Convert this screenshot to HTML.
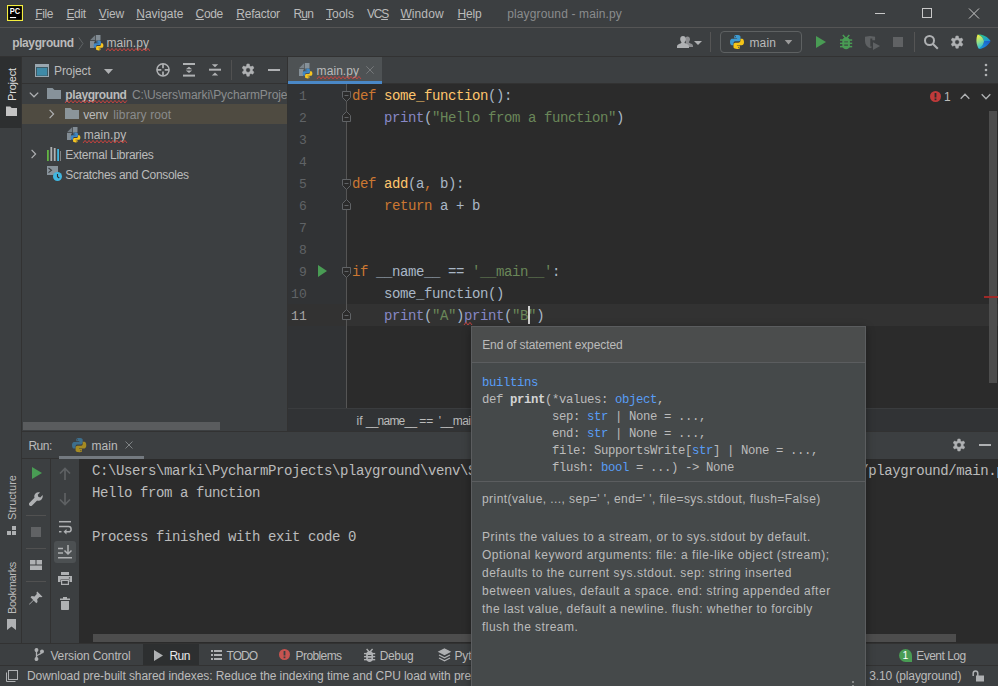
<!DOCTYPE html>
<html>
<head>
<meta charset="utf-8">
<title>playground - main.py</title>
<style>
*{box-sizing:border-box;margin:0;padding:0}
html,body{width:998px;height:686px;overflow:hidden;background:#3c3f41}
body{position:relative;font-family:"Liberation Sans",sans-serif;font-size:12px;color:#bbbbbb}
.a{position:absolute}
.t{position:absolute;white-space:pre;line-height:16px;height:16px}
.m{position:absolute;white-space:pre;font-family:"Liberation Mono",monospace}
.v{position:absolute;white-space:pre;line-height:16px;height:16px;transform-origin:0 0;transform:rotate(-90deg)}
u{text-decoration:underline;text-underline-offset:1px;text-decoration-thickness:1px}
svg{position:absolute;overflow:visible}
.wave{text-decoration:underline wavy #bc3f3c;text-decoration-thickness:1px;text-underline-offset:2px}
.k{color:#cc7832}.f{color:#ffc66d}.s{color:#6a8759}.b{color:#8888c6}.l{color:#589df6}
.ln{position:absolute;width:30px;text-align:right;font-family:"Liberation Mono",monospace;font-size:13px;letter-spacing:.2px;line-height:22px;height:22px;color:#606366;padding-top:2px}
.cl{position:absolute;font-family:"Liberation Mono",monospace;font-size:14px;letter-spacing:-.4px;line-height:22px;height:22px;white-space:pre;color:#a9b7c6;padding-top:1px}
.con{position:absolute;font-family:"Liberation Mono",monospace;font-size:14px;letter-spacing:-.4px;line-height:22px;height:22px;white-space:pre;color:#bbbbbb;padding-top:1px}
.pc{position:absolute;font-family:"Liberation Mono",monospace;font-size:12.300px;letter-spacing:-.38px;line-height:17px;height:17px;white-space:pre;color:#bbbbbb}
</style>
</head>
<body>

<div class="a" style="left:0;top:0;width:998px;height:28px;background:#3c3f41;border-bottom:1px solid #555555"></div>
<svg style="left:7px;top:5px" width="16" height="16" viewBox="0 0 16 16"><rect width="16" height="16" fill="#f5ee3f"/><rect x="1.100" y="1.100" width="13.800" height="13.800" fill="#000"/><text x="2.800" y="9.400" font-family="Liberation Sans,sans-serif" font-weight="bold" font-size="8.800" fill="#fff" textLength="10.400" lengthAdjust="spacingAndGlyphs">PC</text><rect x="2.900" y="12" width="6.200" height="1.100" fill="#fff"/></svg>
<div class="t" id="t1" style="left:35.3px;top:5.5px;letter-spacing:-0.440px;"><u>F</u>ile</div>
<div class="t" id="t2" style="left:66.4px;top:5.5px;letter-spacing:-0.301px;"><u>E</u>dit</div>
<div class="t" id="t3" style="left:98.8px;top:5.5px;letter-spacing:-0.128px;"><u>V</u>iew</div>
<div class="t" id="t4" style="left:136.3px;top:5.5px;letter-spacing:-0.034px;"><u>N</u>avigate</div>
<div class="t" id="t5" style="left:195.6px;top:5.5px;letter-spacing:-0.376px;"><u>C</u>ode</div>
<div class="t" id="t6" style="left:236.3px;top:5.5px;letter-spacing:-0.220px;"><u>R</u>efactor</div>
<div class="t" id="t7" style="left:293.4px;top:5.5px;letter-spacing:-0.749px;">R<u>u</u>n</div>
<div class="t" id="t8" style="left:326px;top:5.5px;letter-spacing:-0.023px;"><u>T</u>ools</div>
<div class="t" id="t9" style="left:367px;top:5.5px;letter-spacing:-1.263px;">VC<u>S</u></div>
<div class="t" id="t10" style="left:400.4px;top:5.5px;letter-spacing:0.102px;"><u>W</u>indow</div>
<div class="t" id="t11" style="left:457.5px;top:5.5px;letter-spacing:-0.172px;"><u>H</u>elp</div>
<div class="t" id="t12" style="left:507.2px;top:5.5px;color:#8a8c8d;letter-spacing:0.137px;">playground - main.py</div>
<svg style="left:875px;top:8px" width="110" height="11" viewBox="0 0 110 11" fill="none" stroke="#c8c8c8" stroke-width="1"><path d="M0 5.500h10"/><rect x="47.500" y=".5" width="9" height="9"/><path d="M94 .5l10 10M104 .5l-10 10"/></svg>
<div class="a" style="left:0;top:28px;width:998px;height:29px;background:#3c3f41;border-bottom:1px solid #323232"></div>
<div class="t" id="t13" style="left:12.2px;top:35px;font-weight:bold;letter-spacing:-0.384px;">playground</div>
<svg style="left:78px;top:36.500px" width="6" height="13" viewBox="0 0 6 13" fill="none" stroke="#5f6365" stroke-width="1"><path d="M.8.5L5 6.500.8 12.500"/></svg>
<svg style="left:89px;top:34px" width="16" height="17" viewBox="0 0 16 17"><path fill="#9aa7b0" fill-opacity=".6" d="M6.300 1L1 6.300h5.300z"/><path fill="#9aa7b0" fill-opacity=".75" d="M7 1h4.500v5.500H8C6.300 6.500 5 7.800 5 9.500V14H1V7h6z"/><g transform="translate(3.900 5.900) scale(.7)"><path fill="#3f87c4" fill-rule="evenodd" d="M7.9 1C5 1 5.2 2.3 5.2 2.3v1.9h2.9v.6H3.4S1 4.5 1 8c0 3.4 2.1 3.3 2.1 3.3h1.4V9.4s-.1-2.1 2-2.1h3s2 0 2-1.900V2.900S11.800 1 7.900 1zM6.300 2.100a.55.55 0 1 1 0 1.100.55.55 0 0 1 0-1.100z"/><path fill="#f7c520" fill-rule="evenodd" d="M8.1 15c2.900 0 2.700-1.300 2.700-1.300v-1.900H7.900v-.6h4.700S15 11.500 15 8c0-3.400-2.100-3.300-2.100-3.300h-1.400v1.900s.1 2.100-2 2.100h-3s-2 0-2 1.900v2.500S4.200 15 8.100 15zM9.700 13.900a.55.55 0 1 1 0-1.100.55.55 0 0 1 0 1.100z"/></g></svg>
<div class="t" id="t14" style="left:106.4px;top:35px;letter-spacing:0.081px;">main.py</div>
<svg style="left:106px;top:48px" width="44" height="3.400" viewBox="0 0 44 3.400" fill="none" stroke="#c4433f" stroke-width="1"><polyline points="0,3 2,0.4 4,3 6,0.4 8,3 10,0.4 12,3 14,0.4 16,3 18,0.4 20,3 22,0.4 24,3 26,0.4 28,3 30,0.4 32,3 34,0.4 36,3 38,0.4 40,3 42,0.4 44,3"/></svg>
<svg style="left:677px;top:34px" width="30" height="16" viewBox="0 0 30 16"><path fill="#afb1b3" d="M10.500 2.500c1.500 0 2.500 1.200 2.500 2.800 0 1.100-.5 2.200-1.200 2.800.1.700.6 1 1.700 1.400 1.200.4 2.500 1 2.500 2.500v1H9.500v-1.500c0-1-.6-1.800-1.500-2.300.6-.3 1-.5 1.100-1.100C8.500 7.500 8 6.500 8 5.300c0-1.600 1-2.800 2.500-2.800z" fill-opacity=".7"/><path fill="#afb1b3" d="M6 2c1.700 0 2.800 1.300 2.800 3.100 0 1.200-.5 2.400-1.300 3.100.1.800.7 1.100 1.900 1.500 1.300.5 2.600 1.100 2.600 2.800V14H0v-1.500c0-1.700 1.300-2.300 2.600-2.800 1.200-.4 1.800-.7 1.900-1.500-.8-.7-1.300-1.900-1.300-3.100C3.200 3.300 4.300 2 6 2z"/><path fill="#afb1b3" d="M17 7h8l-4 4z"/></svg>
<div class="a" style="left:710px;top:32px;width:1px;height:20px;background:#555555"></div>
<div class="a" style="left:720px;top:31px;width:82px;height:22px;border:1px solid #5e6162;border-radius:4px"></div>
<svg style="left:729px;top:34px" width="16" height="16" viewBox="0 0 16 16"><path fill="#3d9ad1" fill-rule="evenodd" d="M7.9 1C5 1 5.2 2.3 5.2 2.3v1.9h2.9v.6H3.4S1 4.5 1 8c0 3.4 2.1 3.3 2.1 3.3h1.4V9.4s-.1-2.1 2-2.1h3s2 0 2-1.900V2.900S11.800 1 7.900 1zM6.300 2.100a.55.55 0 1 1 0 1.100.55.55 0 0 1 0-1.100z"/><path fill="#f5c518" fill-rule="evenodd" d="M8.1 15c2.900 0 2.700-1.300 2.700-1.300v-1.900H7.900v-.6h4.700S15 11.500 15 8c0-3.400-2.100-3.300-2.100-3.300h-1.400v1.900s.1 2.100-2 2.100h-3s-2 0-2 1.900v2.500S4.200 15 8.100 15zM9.700 13.900a.55.55 0 1 1 0-1.100.55.55 0 0 1 0 1.100z"/></svg>
<div class="t" id="t15" style="left:749.5px;top:35px;letter-spacing:0.121px;">main</div>
<svg style="left:784px;top:40px" width="9" height="5" viewBox="0 0 9 6"><path fill="#9b9b9b" d="M0 0h9L4.500 5.500z"/></svg>
<svg style="left:816px;top:36px" width="10" height="12" viewBox="0 0 10 12"><path fill="#499c54" d="M0 0l10 6-10 6z"/></svg>
<svg style="left:839.900px;top:34.800px" width="12.200" height="14.200" viewBox="0 0 12.200 14.200"><g fill="#499c54"><path fill-rule="evenodd" d="M2.300 6C2.300 3.500 4 2.200 6.100 2.200S9.900 3.500 9.900 6v4.500c0 2.500-1.900 3.700-3.800 3.700s-3.800-1.200-3.800-3.700zM4.200 6.500v1.100H8V6.500zM4.200 9.600v1.100H8V9.600z"/><rect x="0" y="4.300" width="12.200" height="1.500"/><rect x="0" y="7.600" width="12.200" height="1.500"/><rect x="0" y="10.900" width="12.200" height="1.500"/><path d="M2.300.5l1.100-1 2.700 3-1.100 1zM9.900.5l-1.100-1-2.700 3 1.100 1z"/></g></svg>
<svg style="left:865px;top:35.800px" width="16" height="14" viewBox="0 0 16 14"><path fill="#5e6163" d="M0 .8L5 0l5.100.8v3.400H7.300V2.400h-2v8.200h1.400v1L5 12.200C2 11 0 8.500 0 5z"/><path fill="#5e6163" d="M8 6.200l7.100 3.900L8 14z"/></svg>
<div class="a" style="left:893px;top:37px;width:10px;height:10px;background:#606264"></div>
<div class="a" style="left:914px;top:32px;width:1px;height:20px;background:#555555"></div>
<svg style="left:923px;top:34px" width="16" height="16" viewBox="0 0 16 16" fill="none" stroke="#afb1b3" stroke-width="2"><circle cx="6.500" cy="6.500" r="4.500"/><path d="M10 10l4.800 4.800"/></svg>
<svg style="left:950px;top:35px" width="14.2" height="14.2" viewBox="0 0 16 16"><path fill="#afb1b3" stroke="#afb1b3" stroke-width=".6" stroke-linejoin="round" fill-rule="evenodd" d="M9.73 3.41L9.32 1.13L6.68 1.13L6.27 3.41L4.89 4.21L2.71 3.42L1.39 5.71L3.17 7.20L3.17 8.80L1.39 10.29L2.71 12.58L4.89 11.79L6.27 12.59L6.68 14.87L9.32 14.87L9.73 12.59L11.11 11.79L13.29 12.58L14.61 10.29L12.83 8.80L12.83 7.20L14.61 5.71L13.29 3.42L11.11 4.21zM5.40 8.00a2.60 2.60 0 1 0 5.20 0a2.60 2.60 0 1 0 -5.20 0z"/></svg>
<svg style="left:975.500px;top:34px" width="15" height="15.500" viewBox="0 0 15 15.500"><defs><linearGradient id="cw1" x1=".2" y1="0" x2=".5" y2="1"><stop offset="0" stop-color="#fbf23f"/><stop offset=".5" stop-color="#8fe08a"/><stop offset="1" stop-color="#18b6ee"/></linearGradient><linearGradient id="cw2" x1="0" y1="0" x2="1" y2="1"><stop offset="0" stop-color="#2fd07a"/><stop offset="1" stop-color="#168fe6"/></linearGradient><linearGradient id="cw3" x1="1" y1="0" x2="0" y2="1"><stop offset="0" stop-color="#1f57c4"/><stop offset="1" stop-color="#159fe8"/></linearGradient></defs><path fill="url(#cw2)" d="M1.600.6C6.500.2 11.500 2.500 14.600 7H8C7.500 4.500 5 1.500 1.600.6z"/><path fill="url(#cw3)" d="M14.600 7C12.800 11 8.500 14.300 3 15.100 6 13 7.800 10 8 7z"/><path fill="url(#cw1)" d="M1.600.6C5 1.500 7.500 4.500 8 7 7.800 10 6 13 3 15.100 0 11-.3 5 1.600.6z"/></svg>
<div class="a" style="left:0;top:57px;width:22px;height:586px;background:#3c3f41;border-right:1px solid #323232"></div>
<div class="a" style="left:0;top:57px;width:21px;height:71px;background:#2d2f30"></div>
<div class="v" id="t16" style="left:4px;top:100.5px;font-size:11px;color:#dfdfdf;letter-spacing:-0.179px;">Project</div>
<svg style="left:5px;top:105px" width="13" height="12" viewBox="0 0 13 12"><path fill="#c4c4c4" d="M1 1.500h4.200L6.700 3H12v8H1z"/></svg>
<div class="v" id="t17" style="left:4px;top:519.5px;font-size:11px;letter-spacing:0.040px;">Structure</div>
<svg style="left:7px;top:526px" width="9" height="9" viewBox="0 0 9 9" fill="#afb1b3"><rect x="5" y="0" width="4" height="4"/><rect x="0" y="5" width="4" height="4"/><rect x="5" y="5" width="4" height="4"/></svg>
<div class="v" id="t18" style="left:4px;top:613.5px;font-size:11px;letter-spacing:-0.337px;">Bookmarks</div>
<svg style="left:7px;top:619px" width="9" height="11" viewBox="0 0 9 11"><path fill="#afb1b3" d="M0 0h9v11L4.500 7.500 0 11z"/></svg>
<div class="a" style="left:22px;top:57px;width:265px;height:27px;border-bottom:1px solid #323232"></div>
<div class="a" style="left:287px;top:57px;width:1px;height:375px;background:#323232"></div>
<svg style="left:35px;top:64px" width="14" height="13" viewBox="0 0 14 13"><rect x=".5" y=".5" width="13" height="12" fill="#3f8fae" fill-opacity=".35" stroke="#9aa7b0"/><rect x=".5" y=".5" width="13" height="2.500" fill="#9aa7b0"/><rect x="2" y="4" width="10" height="7.500" fill="#3f8fae" fill-opacity=".9"/></svg>
<div class="t" id="t19" style="left:54px;top:62.5px;letter-spacing:-0.080px;">Project</div>
<svg style="left:104px;top:68.500px" width="9" height="6" viewBox="0 0 9 6"><path fill="#afb1b3" d="M0 0h9L4.500 5z"/></svg>
<svg style="left:156px;top:63px" width="14" height="14" viewBox="0 0 14 14" fill="none" stroke="#afb1b3" stroke-width="1.500"><circle cx="7" cy="6.800" r="6.100"/><path d="M7 1v4.300M7 8.500v4M1 6.800h4.300M8.700 6.800H13" stroke-width="1.700"/></svg>
<svg style="left:183px;top:63px" width="12" height="14" viewBox="0 0 12 14" fill="#afb1b3"><rect x="0" y="0" width="12" height="2"/><rect x="0" y="11.600" width="12" height="2"/><path d="M6 3.800l3.200 2.400H2.800zM6 10l3.200-2.400H2.800z"/></svg>
<svg style="left:209px;top:63px" width="12" height="14" viewBox="0 0 12 14" fill="#afb1b3"><rect x="0" y="5.700" width="12" height="2"/><path d="M6 4.300L9.200 1.300H2.800zM6 9.500l3.200 3H2.800z"/></svg>
<div class="a" style="left:231px;top:60px;width:1px;height:20px;background:#515151"></div>
<svg style="left:241px;top:62.8px" width="14.2" height="14.2" viewBox="0 0 16 16"><path fill="#afb1b3" stroke="#afb1b3" stroke-width=".6" stroke-linejoin="round" fill-rule="evenodd" d="M9.73 3.41L9.32 1.13L6.68 1.13L6.27 3.41L4.89 4.21L2.71 3.42L1.39 5.71L3.17 7.20L3.17 8.80L1.39 10.29L2.71 12.58L4.89 11.79L6.27 12.59L6.68 14.87L9.32 14.87L9.73 12.59L11.11 11.79L13.29 12.58L14.61 10.29L12.83 8.80L12.83 7.20L14.61 5.71L13.29 3.42L11.11 4.21zM5.40 8.00a2.60 2.60 0 1 0 5.20 0a2.60 2.60 0 1 0 -5.20 0z"/></svg>
<div class="a" style="left:268px;top:69px;width:12px;height:2px;background:#afb1b3"></div>
<div class="a" style="left:22px;top:104px;width:265px;height:20px;background:#4f4b41"></div>
<svg style="left:29px;top:91.5px" width="10" height="6" viewBox="0 0 10 6" fill="none" stroke="#afb1b3" stroke-width="1.300"><path d="M.8.6L5 4.800 9.200.6"/></svg>
<svg style="left:46px;top:86px" width="16" height="16" viewBox="0 0 16 16"><path fill="#9aa7b0" fill-opacity=".8" d="M1 2h5.500l2 2H15v9H1z"/></svg>
<div class="t" id="t20" style="left:65.3px;top:86.5px;font-weight:bold;letter-spacing:-0.414px;">playground</div>
<svg style="left:65px;top:100px" width="62" height="3.400" viewBox="0 0 62 3.400" fill="none" stroke="#c4433f" stroke-width="1"><polyline points="0,3 2,0.4 4,3 6,0.4 8,3 10,0.4 12,3 14,0.4 16,3 18,0.4 20,3 22,0.4 24,3 26,0.4 28,3 30,0.4 32,3 34,0.4 36,3 38,0.4 40,3 42,0.4 44,3 46,0.4 48,3 50,0.4 52,3 54,0.4 56,3 58,0.4 60,3 62,0.4"/></svg>
<div class="t" id="t21" style="left:132px;top:86.5px;color:#8a8c8d;letter-spacing:-0.099px;width:155px;overflow:hidden;">C:\Users\marki\PycharmProjects\playground</div>
<svg style="left:49px;top:109px" width="6" height="10" viewBox="0 0 6 10" fill="none" stroke="#afb1b3" stroke-width="1.200"><path d="M.6.8L4.600 5 .6 9.200"/></svg>
<svg style="left:64px;top:106px" width="16" height="16" viewBox="0 0 16 16"><path fill="#9aa7b0" fill-opacity=".8" d="M1 2h5.500l2 2H15v9H1z"/></svg>
<div class="t" id="t22" style="left:83.3px;top:106.5px;letter-spacing:-0.215px;">venv</div>
<div class="t" id="t23" style="left:113.3px;top:106.5px;color:#8a8c8d;letter-spacing:0.109px;">library root</div>
<svg style="left:66px;top:126px" width="16" height="17" viewBox="0 0 16 17"><path fill="#9aa7b0" fill-opacity=".6" d="M6.300 1L1 6.300h5.300z"/><path fill="#9aa7b0" fill-opacity=".75" d="M7 1h4.500v5.500H8C6.300 6.500 5 7.800 5 9.500V14H1V7h6z"/><g transform="translate(3.900 5.900) scale(.7)"><path fill="#3f87c4" fill-rule="evenodd" d="M7.9 1C5 1 5.2 2.3 5.2 2.3v1.9h2.9v.6H3.4S1 4.5 1 8c0 3.4 2.1 3.3 2.1 3.3h1.4V9.4s-.1-2.1 2-2.1h3s2 0 2-1.900V2.900S11.800 1 7.900 1zM6.300 2.100a.55.55 0 1 1 0 1.100.55.55 0 0 1 0-1.100z"/><path fill="#f7c520" fill-rule="evenodd" d="M8.1 15c2.900 0 2.700-1.300 2.700-1.300v-1.900H7.900v-.6h4.700S15 11.500 15 8c0-3.400-2.100-3.300-2.100-3.300h-1.400v1.900s.1 2.100-2 2.100h-3s-2 0-2 1.900v2.500S4.200 15 8.100 15zM9.700 13.900a.55.55 0 1 1 0-1.100.55.55 0 0 1 0 1.100z"/></g></svg>
<div class="t" id="t24" style="left:83.7px;top:126.5px;letter-spacing:0.081px;">main.py</div>
<svg style="left:83px;top:140px" width="44" height="3.400" viewBox="0 0 44 3.400" fill="none" stroke="#c4433f" stroke-width="1"><polyline points="0,3 2,0.4 4,3 6,0.4 8,3 10,0.4 12,3 14,0.4 16,3 18,0.4 20,3 22,0.4 24,3 26,0.4 28,3 30,0.4 32,3 34,0.4 36,3 38,0.4 40,3 42,0.4 44,3"/></svg>
<svg style="left:31px;top:149px" width="6" height="10" viewBox="0 0 6 10" fill="none" stroke="#afb1b3" stroke-width="1.200"><path d="M.6.8L4.600 5 .6 9.200"/></svg>
<svg style="left:47px;top:147px" width="14" height="14" viewBox="0 0 14 14"><rect x="0" y="3" width="1.800" height="11" fill="#62b543"/><rect x="3.400" y="0" width="1.800" height="14" fill="#afb1b3"/><rect x="6.800" y="1" width="1.800" height="13" fill="#afb1b3"/><rect x="10.200" y="2" width="1.800" height="12" fill="#40b6e0"/><rect x="13" y="4" width="1" height="10" fill="#afb1b3" fill-opacity=".6"/></svg>
<div class="t" id="t25" style="left:65.3px;top:146.5px;letter-spacing:-0.287px;">External Libraries</div>
<svg style="left:46px;top:165px" width="17" height="17" viewBox="0 0 17 17"><path fill="#9aa7b0" fill-opacity=".8" d="M1 1h11v6.500A5 5 0 0 0 7.500 10H1z"/><path fill="none" stroke="#3c3f41" stroke-width="1.100" d="M2.500 3l3 2.300-3 2.300"/><circle cx="11.500" cy="11.500" r="4.500" fill="#40b6e0"/><path fill="none" stroke="#2b2b2b" stroke-width="1.100" d="M11.500 9v2.800l1.800 1.200"/></svg>
<div class="t" id="t26" style="left:65.3px;top:166.5px;letter-spacing:-0.299px;">Scratches and Consoles</div>
<div class="a" style="left:23px;top:422px;width:197px;height:8px;background:#5a5c5e"></div>
<div class="a" style="left:288px;top:57px;width:710px;height:27px;border-bottom:1px solid #323232"></div>
<div class="a" style="left:288px;top:57px;width:94px;height:27px;background:#4e5254;border-bottom:3px solid #4a88c7"></div>
<svg style="left:298px;top:62px" width="16" height="17" viewBox="0 0 16 17"><path fill="#9aa7b0" fill-opacity=".6" d="M6.300 1L1 6.300h5.300z"/><path fill="#9aa7b0" fill-opacity=".75" d="M7 1h4.500v5.500H8C6.300 6.500 5 7.800 5 9.500V14H1V7h6z"/><g transform="translate(3.900 5.900) scale(.7)"><path fill="#3f87c4" fill-rule="evenodd" d="M7.9 1C5 1 5.2 2.3 5.2 2.3v1.9h2.9v.6H3.4S1 4.5 1 8c0 3.4 2.1 3.3 2.1 3.3h1.4V9.4s-.1-2.1 2-2.1h3s2 0 2-1.900V2.900S11.800 1 7.900 1zM6.300 2.100a.55.55 0 1 1 0 1.100.55.55 0 0 1 0-1.100z"/><path fill="#f7c520" fill-rule="evenodd" d="M8.1 15c2.900 0 2.700-1.300 2.700-1.300v-1.900H7.900v-.6h4.700S15 11.500 15 8c0-3.400-2.100-3.300-2.100-3.300h-1.400v1.900s.1 2.100-2 2.100h-3s-2 0-2 1.900v2.500S4.200 15 8.100 15zM9.700 13.900a.55.55 0 1 1 0-1.100.55.55 0 0 1 0 1.100z"/></g></svg>
<div class="t" id="t27" style="left:316.6px;top:62.5px;letter-spacing:0.067px;">main.py</div>
<svg style="left:317px;top:76px" width="44" height="3.400" viewBox="0 0 44 3.400" fill="none" stroke="#c4433f" stroke-width="1"><polyline points="0,3 2,0.4 4,3 6,0.4 8,3 10,0.4 12,3 14,0.4 16,3 18,0.4 20,3 22,0.4 24,3 26,0.4 28,3 30,0.4 32,3 34,0.4 36,3 38,0.4 40,3 42,0.4 44,3"/></svg>
<svg style="left:366px;top:66px" width="8" height="8" viewBox="0 0 8 8" fill="none" stroke="#75787a" stroke-width="1"><path d="M.3.300l7.400 7.400M7.700.3l-7.400 7.400"/></svg>
<svg style="left:984px;top:63px" width="4" height="14" viewBox="0 0 4 14" fill="#afb1b3"><circle cx="2" cy="2" r="1.300"/><circle cx="2" cy="7" r="1.300"/><circle cx="2" cy="12" r="1.300"/></svg>
<div class="a" style="left:288px;top:84px;width:710px;height:324px;background:#2b2b2b"></div>
<div class="a" style="left:288px;top:84px;width:58px;height:324px;background:#313335"></div>
<div class="a" style="left:288px;top:304px;width:710px;height:22px;background:#323232"></div>
<div class="a" style="left:346px;top:84px;width:1px;height:324px;background:#555555"></div>
<div class="ln" style="left:277px;top:84px">1</div>
<div class="ln" style="left:277px;top:106px">2</div>
<div class="ln" style="left:277px;top:128px">3</div>
<div class="ln" style="left:277px;top:150px">4</div>
<div class="ln" style="left:277px;top:172px">5</div>
<div class="ln" style="left:277px;top:194px">6</div>
<div class="ln" style="left:277px;top:216px">7</div>
<div class="ln" style="left:277px;top:238px">8</div>
<div class="ln" style="left:277px;top:260px">9</div>
<div class="ln" style="left:277px;top:282px">10</div>
<div class="ln" style="left:277px;top:304px;color:#a4a3a3">11</div>
<div class="cl" style="left:352px;top:84px"><span class="k">def </span><span class="f">some_function</span>():</div>
<div class="cl" style="left:352px;top:106px">    <span class="b">print</span>(<span class="s">"Hello from a function"</span>)</div>
<div class="cl" style="left:352px;top:172px"><span class="k">def </span><span class="f">add</span>(a<span class="k">, </span>b):</div>
<div class="cl" style="left:352px;top:194px">    <span class="k">return </span>a + b</div>
<div class="cl" style="left:352px;top:260px"><span class="k">if </span>__name__ == <span class="s">'__main__'</span>:</div>
<div class="cl" style="left:352px;top:282px">    some_function()</div>
<div class="cl" style="left:352px;top:304px">    <span class="b">print</span>(<span class="s">"A"</span>)<span class="b">print</span>(<span class="s">"B"</span>)</div>
<svg style="left:342px;top:91px" width="9" height="11" viewBox="0 0 9 11"><path fill="#2b2b2b" stroke="#606366" d="M.5.5h8v6L4.500 10.500.5 6.500z"/><path stroke="#606366" d="M2.500 4.500h4"/></svg>
<svg style="left:342px;top:179px" width="9" height="11" viewBox="0 0 9 11"><path fill="#2b2b2b" stroke="#606366" d="M.5.5h8v6L4.500 10.500.5 6.500z"/><path stroke="#606366" d="M2.500 4.500h4"/></svg>
<svg style="left:342px;top:267px" width="9" height="11" viewBox="0 0 9 11"><path fill="#2b2b2b" stroke="#606366" d="M.5.5h8v6L4.500 10.500.5 6.500z"/><path stroke="#606366" d="M2.500 4.500h4"/></svg>
<svg style="left:342px;top:111px" width="9" height="11" viewBox="0 0 9 11"><path fill="#2b2b2b" stroke="#606366" d="M.5 10.500h8v-6L4.500.5.5 4.500z"/><path stroke="#606366" d="M2.500 6.500h4"/></svg>
<svg style="left:342px;top:199px" width="9" height="11" viewBox="0 0 9 11"><path fill="#2b2b2b" stroke="#606366" d="M.5 10.500h8v-6L4.500.5.5 4.500z"/><path stroke="#606366" d="M2.500 6.500h4"/></svg>
<svg style="left:342px;top:309px" width="9" height="11" viewBox="0 0 9 11"><path fill="#2b2b2b" stroke="#606366" d="M.5 10.500h8v-6L4.500.5.5 4.500z"/><path stroke="#606366" d="M2.500 6.500h4"/></svg>
<svg style="left:318px;top:265px" width="9" height="12" viewBox="0 0 9 12"><path fill="#499c54" d="M0 0l9 6-9 6z"/></svg>
<div class="a" style="left:528px;top:306px;width:2px;height:18px;background:#d0d0d0"></div>
<svg style="left:464px;top:322px" width="8" height="3.400" viewBox="0 0 8 3.400" fill="none" stroke="#c4433f" stroke-width="1"><polyline points="0,3 2,0.4 4,3 6,0.4 8,3"/></svg>
<svg style="left:930px;top:91px" width="11" height="11" viewBox="0 0 11 11"><circle cx="5.500" cy="5.500" r="5.500" fill="#c03a3a"/><rect x="4.600" y="2" width="1.800" height="4.500" fill="#2b2b2b"/><rect x="4.600" y="7.500" width="1.800" height="1.700" fill="#2b2b2b"/></svg>
<div class="t" id="t28" style="left:944px;top:88.5px;color:#bbbbbb;">1</div>
<svg style="left:960px;top:93px" width="31" height="7" viewBox="0 0 31 7" fill="none" stroke="#afb1b3" stroke-width="1.300"><path d="M.7 5.800L5 1.300l4.300 4.500M21.700 1.200L26 5.700l4.300-4.500"/></svg>
<div class="a" style="left:989px;top:111px;width:8px;height:272px;background:#4d4d4d"></div>
<div class="a" style="left:984px;top:296px;width:14px;height:2px;background:#9e2927"></div>
<div class="a" style="left:288px;top:408px;width:710px;height:23px;background:#313335;border-top:1px solid #3a3c3e"></div>
<div class="t" id="t29" style="left:356.4px;top:413px;letter-spacing:0.250px;">if</div>
<div class="t" id="t30" style="left:365.8px;top:413px;letter-spacing:-0.777px;">__name__</div>
<div class="t" id="t31" style="left:419.2px;top:413px;letter-spacing:0.142px;">==</div>
<div class="t" id="t32" style="left:438.7px;top:413px;letter-spacing:-0.547px;">'__main__'</div>
<div class="a" style="left:22px;top:431px;width:976px;height:27px;background:#3c3f41;border-top:1px solid #323232"></div>
<div class="t" id="t33" style="left:28.4px;top:438px;letter-spacing:-0.465px;">Run:</div>
<svg style="left:71px;top:436.7px" width="16.3" height="16.3" viewBox="0 0 16 16"><path fill="#3d6e8c" fill-rule="evenodd" d="M7.9 1C5 1 5.2 2.3 5.2 2.3v1.9h2.9v.6H3.4S1 4.5 1 8c0 3.4 2.1 3.3 2.1 3.3h1.4V9.4s-.1-2.1 2-2.1h3s2 0 2-1.900V2.900S11.800 1 7.900 1zM6.300 2.100a.55.55 0 1 1 0 1.100.55.55 0 0 1 0-1.100z"/><path fill="#a48a22" fill-rule="evenodd" d="M8.1 15c2.900 0 2.700-1.300 2.700-1.300v-1.900H7.900v-.6h4.700S15 11.500 15 8c0-3.400-2.100-3.300-2.100-3.300h-1.400v1.900s.1 2.100-2 2.100h-3s-2 0-2 1.900v2.500S4.200 15 8.100 15zM9.700 13.900a.55.55 0 1 1 0-1.100.55.55 0 0 1 0 1.100z"/></svg>
<div class="t" id="t34" style="left:91.4px;top:438px;letter-spacing:0.121px;">main</div>
<svg style="left:125px;top:441px" width="8" height="8" viewBox="0 0 8 8" fill="none" stroke="#7f8385" stroke-width="1"><path d="M.5.5l7 7M7.500.5l-7 7"/></svg>
<div class="a" style="left:59px;top:456px;width:85px;height:3px;background:#747a80;z-index:2"></div>
<svg style="left:952px;top:438px" width="14" height="14" viewBox="0 0 16 16"><path fill="#afb1b3" stroke="#afb1b3" stroke-width=".6" stroke-linejoin="round" fill-rule="evenodd" d="M9.73 3.41L9.32 1.13L6.68 1.13L6.27 3.41L4.89 4.21L2.71 3.42L1.39 5.71L3.17 7.20L3.17 8.80L1.39 10.29L2.71 12.58L4.89 11.79L6.27 12.59L6.68 14.87L9.32 14.87L9.73 12.59L11.11 11.79L13.29 12.58L14.61 10.29L12.83 8.80L12.83 7.20L14.61 5.71L13.29 3.42L11.11 4.21zM5.40 8.00a2.60 2.60 0 1 0 5.20 0a2.60 2.60 0 1 0 -5.20 0z"/></svg>
<div class="a" style="left:979px;top:444px;width:12px;height:2px;background:#afb1b3"></div>
<div class="a" style="left:22px;top:458px;width:29px;height:185px;border-right:1px solid #323232"></div>
<div class="a" style="left:79px;top:459px;width:919px;height:184px;background:#2b2b2b"></div>
<div class="a" style="left:22px;top:458px;width:58px;height:1px;background:#323232"></div>
<svg style="left:32px;top:467px" width="10" height="12" viewBox="0 0 10 12"><path fill="#499c54" d="M0 0l10 6-10 6z"/></svg>
<svg style="left:29px;top:492px" width="14" height="14" viewBox="0 0 14 14"><path fill="#afb1b3" d="M13.600 3.100l-2.300 2.300-2-.6-.6-2L11 .5C9.500-.1 7.700.2 6.500 1.400 5.300 2.600 5 4.300 5.500 5.800L.5 10.800c-.7.700-.7 1.900 0 2.600.7.700 1.900.7 2.600 0l5-5c1.500.5 3.200.2 4.400-1 1.200-1.200 1.500-2.900 1.100-4.300z"/></svg>
<div class="a" style="left:26px;top:515px;width:20px;height:1px;background:#515151"></div>
<div class="a" style="left:31px;top:527px;width:10px;height:10px;background:#606264"></div>
<div class="a" style="left:26px;top:548px;width:20px;height:1px;background:#515151"></div>
<svg style="left:30px;top:560px" width="12" height="10" viewBox="0 0 12 10" fill="#afb1b3"><rect x="0" y="0" width="5.500" height="4.500"/><rect x="6.500" y="0" width="5.500" height="4.500"/><rect x="0" y="5.500" width="12" height="4.500"/></svg>
<div class="a" style="left:26px;top:581px;width:20px;height:1px;background:#515151"></div>
<svg style="left:29px;top:591px" width="14" height="14" viewBox="0 0 14 14"><path fill="#afb1b3" d="M8.200.5l5.300 5.300-1.300.4-1.700-.3-2.300 2.300.3 2.800-1.200 1.200L4.600 9.400.6 13.400l-.5.100.1-.5 4-4L1.500 6.300l1.200-1.200 2.800.3 2.300-2.300-.3-1.700z"/></svg>
<svg style="left:59px;top:467px" width="12" height="13" viewBox="0 0 12 13" fill="none" stroke="#5e6163" stroke-width="1.700"><path d="M6 13V1.500M1 6.500l5-5 5 5"/></svg>
<svg style="left:59px;top:493px" width="12" height="13" viewBox="0 0 12 13" fill="none" stroke="#5e6163" stroke-width="1.700"><path d="M6 0v11.500M1 6.500l5 5 5-5"/></svg>
<svg style="left:58px;top:520px" width="14" height="14" viewBox="0 0 14 14" fill="none" stroke="#afb1b3" stroke-width="1.500"><path d="M1 1.700h12"/><path d="M1 6.500h9.500a2.600 2.600 0 0 1 0 5.300H7"/><path d="M1 11.700h2.500" /><path fill="#afb1b3" stroke="none" d="M8.500 9v5.500L5.500 11.700z"/></svg>
<div class="a" style="left:54px;top:541px;width:22px;height:22px;background:#4c5052;border-radius:3px"></div>
<svg style="left:58px;top:545px" width="14" height="14" viewBox="0 0 14 14" fill="none" stroke="#afb1b3" stroke-width="1.500"><path d="M0 12.700h14M0 3.500h5M0 8h5"/><path d="M10 0v8.500M6.500 5.500L10 9l3.500-3.500"/></svg>
<svg style="left:58px;top:572px" width="14" height="13" viewBox="0 0 14 13"><path fill="#afb1b3" d="M3 0h8v3H3zM0 4h14v6h-2.500V7.500h-9V10H0zM11.500 5.200a.7.700 0 1 0 0 1.400.7.700 0 0 0 0-1.400z" fill-rule="evenodd"/><path fill="none" stroke="#afb1b3" stroke-width="1.200" d="M3.600 8.500h6.800v3.900H3.600z"/></svg>
<svg style="left:60px;top:597px" width="10" height="13" viewBox="0 0 10 13" fill="#afb1b3"><path d="M3 0h4v1.500h3V3H0V1.500h3zM1 4h8v8c0 .6-.4 1-1 1H2c-.6 0-1-.4-1-1z"/></svg>
<div class="con" style="left:92px;top:459px;width:906px;overflow:hidden">C:\Users\marki\PycharmProjects\playground\venv\Scripts\python.exe C:/Users/marki/PycharmProjects/playground/main.py</div>
<div class="con" style="left:92px;top:481px;width:906px;overflow:hidden">Hello from a function</div>
<div class="con" style="left:92px;top:525px;width:906px;overflow:hidden">Process finished with exit code 0</div>
<div class="a" style="left:93px;top:634px;width:863px;height:8px;background:#4d4d4d"></div>
<div class="a" style="left:0;top:643px;width:998px;height:22px;background:#3c3f41;border-top:1px solid #323232"></div>
<svg style="left:34px;top:648px" width="10" height="13" viewBox="0 0 10 13" fill="none" stroke="#afb1b3" stroke-width="1.300"><circle cx="2.500" cy="2" r="1.300" fill="#afb1b3"/><circle cx="2.500" cy="11" r="1.300" fill="#afb1b3"/><circle cx="8" cy="3.500" r="1.300" fill="#afb1b3"/><path d="M2.500 2v9M8 3.500c0 3.500-5.500 2.500-5.500 5"/></svg>
<div class="t" id="t35" style="left:50.4px;top:647.5px;letter-spacing:-0.123px;">Version Control</div>
<div class="a" style="left:143px;top:644px;width:56px;height:21px;background:#2d2f30"></div>
<svg style="left:154px;top:650px" width="9" height="11" viewBox="0 0 9 11"><path fill="#afb1b3" d="M0 0l9 5.500-9 5.500z"/></svg>
<div class="t" id="t36" style="left:169.4px;top:647.5px;color:#e8e8e8;letter-spacing:-0.505px;">Run</div>
<svg style="left:211px;top:650px" width="11" height="10" viewBox="0 0 11 10" fill="#afb1b3"><rect x="0" y="0" width="2" height="2"/><rect x="3" y="0" width="8" height="2"/><rect x="0" y="4" width="2" height="2"/><rect x="3" y="4" width="8" height="2"/><rect x="0" y="8" width="2" height="2"/><rect x="3" y="8" width="8" height="2"/></svg>
<div class="t" id="t37" style="left:226.5px;top:647.5px;letter-spacing:-0.988px;">TODO</div>
<svg style="left:279px;top:649px" width="11" height="11" viewBox="0 0 11 11"><circle cx="5.500" cy="5.500" r="5.500" fill="#c75450"/><rect x="4.600" y="2" width="1.800" height="4.500" fill="#3c3f41"/><rect x="4.600" y="7.500" width="1.800" height="1.700" fill="#3c3f41"/></svg>
<div class="t" id="t38" style="left:295.6px;top:647.5px;letter-spacing:-0.598px;">Problems</div>
<svg style="left:363.500px;top:649px" width="11.200" height="13" viewBox="0 0 12.200 14.200"><g fill="#afb1b3"><path fill-rule="evenodd" d="M2.300 6C2.300 3.500 4 2.200 6.100 2.200S9.900 3.500 9.900 6v4.500c0 2.500-1.900 3.700-3.800 3.700s-3.800-1.200-3.800-3.700zM4.200 6.500v1.100H8V6.500zM4.200 9.600v1.100H8V9.600z"/><rect x="0" y="4.300" width="12.200" height="1.500"/><rect x="0" y="7.600" width="12.200" height="1.500"/><rect x="0" y="10.900" width="12.200" height="1.500"/><path d="M2.300.5l1.100-1 2.700 3-1.100 1zM9.900.5l-1.100-1-2.700 3 1.100 1z"/></g></svg>
<div class="t" id="t39" style="left:379.7px;top:647.5px;letter-spacing:-0.335px;">Debug</div>
<svg style="left:438px;top:648px" width="13" height="14" viewBox="0 0 13 14" fill="none" stroke="#afb1b3" stroke-width="1.200"><path fill="#afb1b3" d="M6.500 1l5.500 2.800-5.500 2.800L1 3.800z"/><path d="M1 7l5.500 2.800L12 7M1 10l5.500 2.800L12 10"/></svg>
<div class="t" id="t40" style="left:454.4px;top:647.5px;letter-spacing:-0.094px;">Python Packages</div>
<svg style="left:899px;top:649px" width="13" height="13" viewBox="0 0 13 13"><path fill="#499c54" d="M6.500 0a6.500 6.500 0 1 0 0 13H13V6.500A6.500 6.500 0 0 0 6.500 0z"/><text x="6.300" y="10.200" text-anchor="middle" font-family="Liberation Sans,sans-serif" font-size="10.500" fill="#fff">1</text></svg>
<div class="t" id="t41" style="left:916.2px;top:647.5px;letter-spacing:-0.505px;">Event Log</div>
<div class="a" style="left:0;top:665px;width:998px;height:21px;background:#3c3f41;border-top:1px solid #323232"></div>
<svg style="left:6px;top:670px" width="12" height="12" viewBox="0 0 12 12" fill="none" stroke="#afb1b3" stroke-width="1"><rect x="2.500" y=".5" width="9" height="9"/><path d="M.5 2.500v9h9"/></svg>
<div class="t" id="t42" style="left:27px;top:668px;letter-spacing:-0.077px;">Download pre-built shared indexes: Reduce the indexing time and CPU load with pre-built Python packages shared indexes</div>
<div class="t" id="t43" style="left:869.3px;top:668px;letter-spacing:-0.121px;">3.10 (playground)</div>
<svg style="left:972px;top:669px" width="13" height="13" viewBox="0 0 13 13"><path fill="none" stroke="#afb1b3" stroke-width="1.500" d="M1.200 7V4.200a2.300 2.300 0 0 1 4.600 0V7"/><rect x="4" y="6.500" width="8" height="6" fill="#afb1b3"/></svg>
<div class="a" style="left:471px;top:326px;width:395px;height:362px;background:#45494a;border:1px solid #5b5d5f;box-shadow:0 2px 8px rgba(0,0,0,.35)"></div>
<div class="a" style="left:472px;top:327px;width:393px;height:35px;background:#4b4d4d"></div>
<div class="a" style="left:472px;top:362px;width:393px;height:1px;background:#5b5d5f"></div>
<div class="t" id="t44" style="left:482.2px;top:336.5px;letter-spacing:-0.095px;">End of statement expected</div>
<div class="pc" style="left:482px;top:374.5px"><span class="l">builtins</span></div>
<div class="pc" style="left:482px;top:391.5px">def <b style="color:#d4d4d4">print</b>(*values: <span class="l">object</span>,</div>
<div class="pc" style="left:482px;top:408.5px">          sep: <span class="l">str</span> | None = ...,</div>
<div class="pc" style="left:482px;top:425.5px">          end: <span class="l">str</span> | None = ...,</div>
<div class="pc" style="left:482px;top:442.5px">          file: SupportsWrite[<span class="l">str</span>] | None = ...,</div>
<div class="pc" style="left:482px;top:459.5px">          flush: <span class="l">bool</span> = ...) -&gt; None</div>
<div class="a" style="left:472px;top:481px;width:393px;height:1px;background:#5b5d5f"></div>
<div class="t" id="t45" style="left:482px;top:490.5px;letter-spacing:0.431px;">print(value, ..., sep=' ', end=' ', file=sys.stdout, flush=False)</div>
<div class="t" id="t46" style="left:482px;top:528.5px;letter-spacing:0.507px;">Prints the values to a stream, or to sys.stdout by default.</div>
<div class="t" id="t47" style="left:482px;top:546.5px;letter-spacing:0.517px;">Optional keyword arguments: file: a file-like object (stream);</div>
<div class="t" id="t48" style="left:482px;top:564.5px;letter-spacing:0.506px;">defaults to the current sys.stdout. sep: string inserted</div>
<div class="t" id="t49" style="left:482px;top:582.5px;letter-spacing:0.516px;">between values, default a space. end: string appended after</div>
<div class="t" id="t50" style="left:482px;top:600.5px;letter-spacing:0.446px;">the last value, default a newline. flush: whether to forcibly</div>
<div class="t" id="t51" style="left:482px;top:618.5px;letter-spacing:0.440px;">flush the stream.</div>
<svg style="left:851px;top:680px" width="4" height="10" viewBox="0 0 4 10" fill="#9a9c9d"><circle cx="2" cy="2" r="1"/><circle cx="2" cy="6" r="1"/></svg>
</body>
</html>
